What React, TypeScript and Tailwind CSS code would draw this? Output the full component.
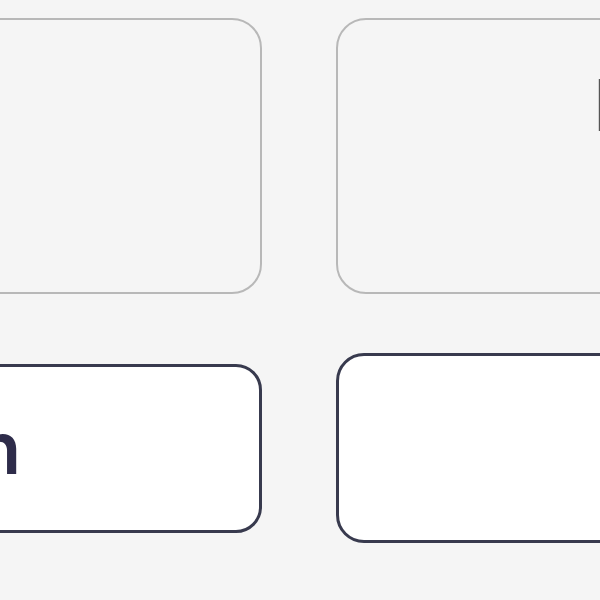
export default function App() {
  return (
    <div className="w-[600px] h-[600px] overflow-hidden bg-[#f5f5f5] flex flex-col pt-[18px]" style={{ fontFamily: 'Inter, "Liberation Sans", sans-serif' }}>
      <div className="flex gap-[74px] ml-[-200px] shrink-0">
        <div className="w-[462px] h-[276px] shrink-0 rounded-[30px] border-2 border-[#b8b8b8] bg-[#f5f5f5]" />
        <div className="w-[300px] h-[276px] shrink-0 rounded-[30px] border-2 border-[#b8b8b8] bg-[#f5f5f5] pt-[49px] pl-[255px]">
          <span className="block text-[72px] leading-none font-medium text-[#555555] whitespace-nowrap">Log in</span>
        </div>
      </div>
      <div className="flex items-center gap-[74px] ml-[-200px] mt-[59px] h-[190px] shrink-0">
        <div className="w-[462px] h-[169px] shrink-0 rounded-[26px] border-[3px] border-[#383a4e] bg-white flex items-center justify-end pr-[238px]">
          <span className="text-[72px] leading-none font-semibold text-[#2e2c4a] whitespace-nowrap">Sign in</span>
        </div>
        <div className="w-[300px] h-[190px] shrink-0 rounded-[28px] border-[3px] border-[#383a4e] bg-white" />
      </div>
    </div>
  );
}
